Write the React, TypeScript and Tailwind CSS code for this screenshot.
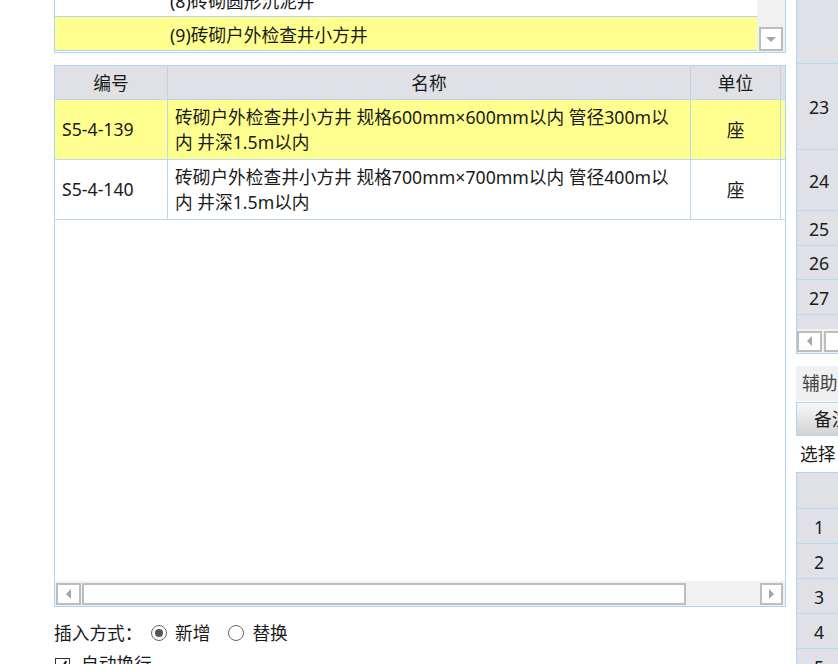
import React from "react";

// 定额查询面板：清单条目 + 定额子目表 + 右侧行号栏

type Quota = {
  code: string;
  name: string[];
  unit: string;
  active?: boolean;
};

const quotas: Quota[] = [
  {
    code: "S5-4-139",
    name: ["砖砌户外检查井小方井 规格600mm×600mm以内 管径300m以", "内 井深1.5m以内"],
    unit: "座",
    active: true,
  },
  {
    code: "S5-4-140",
    name: ["砖砌户外检查井小方井 规格700mm×700mm以内 管径400m以", "内 井深1.5m以内"],
    unit: "座",
  },
];

function Arrow({ dir }: { dir: "down" | "left" | "right" }) {
  const pts =
    dir === "down" ? "0,0 10,0 5,5" : dir === "left" ? "5,0 5,10 0,5" : "0,0 0,10 5,5";
  const w = dir === "down" ? 10 : 5;
  const h = dir === "down" ? 5 : 10;
  return (
    <svg width={w} height={h} viewBox={`0 0 ${w} ${h}`}>
      <polygon points={pts} fill="#a6a6a6" />
    </svg>
  );
}

function ScrollButton({ dir, className }: { dir: "down" | "left" | "right"; className: string }) {
  return (
    <div className={`shrink-0 flex items-center justify-center bg-white border-2 border-[#bdbdbd] ${className}`}>
      <Arrow dir={dir} />
    </div>
  );
}

function TopList() {
  return (
    <div className="h-[53px] shrink-0 flex border-x border-b border-[#aad6f4]">
      <div className="flex-1 flex flex-col">
        <div className="h-[17px] shrink-0 overflow-hidden border-b border-[#aad6f4]">
          <div className="h-[34px] -mt-[17px] flex items-center pl-[115px] pt-[2px]">(8)砖砌圆形沉泥井</div>
        </div>
        <div className="h-[34px] shrink-0 bg-[#ffff8f] flex items-center pl-[115px] pt-[3px] border-b border-[#aad6f4]">
          (9)砖砌户外检查井小方井
        </div>
      </div>
      <div className="w-[28px] bg-[#f1f1f1] flex flex-col justify-end items-center pb-[1px]">
        <ScrollButton dir="down" className="w-[24px] h-[24px]" />
      </div>
    </div>
  );
}

function QuotaTable() {
  return (
    <div className="mt-[12px] h-[542px] shrink-0 flex flex-col border border-[#aad6f4]">
      <div className="h-[34px] flex bg-[#dfe1e6] border-b border-[#b9d9f0] shrink-0 pt-[1px]">
        <div className="w-[113px] border-r border-[#c5d3e0] flex items-center justify-center">编号</div>
        <div className="w-[523px] border-r border-[#c5d3e0] flex items-center justify-center">名称</div>
        <div className="w-[90px] border-r border-[#c5d3e0] flex items-center justify-center">单位</div>
        <div className="flex-1" />
      </div>
      {quotas.map((q) => (
        <div
          key={q.code}
          className={`h-[60px] flex border-b border-[#b9d9f0] shrink-0 ${q.active ? "bg-[#ffff8f]" : "bg-white"}`}
        >
          <div className="w-[113px] border-r border-[#b9d9f0] flex items-center pl-[7px]">{q.code}</div>
          <div className="w-[523px] border-r border-[#b9d9f0] flex flex-col justify-center pl-[7px] leading-[25px] whitespace-nowrap">
            {q.name.map((line) => (
              <span key={line}>{line}</span>
            ))}
          </div>
          <div className="w-[90px] border-r border-[#b9d9f0] flex items-center justify-center pt-[2px]">
            {q.unit}
          </div>
          <div className="flex-1" />
        </div>
      ))}
      <div className="flex-1" />
      <div className="h-[25px] shrink-0 bg-[#f1f1f1] flex items-center pl-[1px] pr-[2px]">
        <ScrollButton dir="left" className="w-[25px] h-[22px]" />
        <div className="ml-[1px] w-[604px] h-[22px] shrink-0 bg-white border-2 border-[#bdbdbd]" />
        <div className="flex-1" />
        <ScrollButton dir="right" className="w-[23px] h-[22px]" />
      </div>
    </div>
  );
}

function InsertOptions() {
  return (
    <div className="flex flex-col shrink-0">
      <div className="mt-[14px] h-[24px] shrink-0 flex items-center">
        <span className="w-[97px]">插入方式：</span>
        <span className="w-[16px] h-[16px] rounded-full border border-[#666] flex items-center justify-center">
          <span className="w-[8px] h-[8px] rounded-full bg-[#555]" />
        </span>
        <span className="ml-[8px]">新增</span>
        <span className="ml-[18px] w-[16px] h-[16px] rounded-full border border-[#666]" />
        <span className="ml-[8px]">替换</span>
      </div>
      <div className="mt-[7px] h-[24px] shrink-0 flex items-center">
        <span className="ml-[1px] mt-[3px] w-[15px] h-[15px] border border-[#333] bg-white flex items-center justify-center">
          <svg width="11" height="11" viewBox="0 0 11 11">
            <path d="M2 5.8 L4.3 8.8 L9.3 1.2" fill="none" stroke="#111" strokeWidth="2" />
          </svg>
        </span>
        <span className="ml-[11px]">自动换行</span>
      </div>
    </div>
  );
}

function RowHead({ n, h, last }: { n?: string; h: string; last?: boolean }) {
  return (
    <div
      className={`${h} shrink-0 w-[44px] bg-[#dfe1e6] flex items-center justify-center pt-[2px] ${last ? "" : "border-b border-[#b9d9f0]"}`}
    >
      {n}
    </div>
  );
}

function RightPanel() {
  return (
    <div className="w-[42px] shrink-0 overflow-hidden flex flex-col">
      <div className="w-[60px] h-[354px] shrink-0 flex flex-col border-l border-b border-[#aad6f4] bg-[#dfe1e6]">
        <RowHead h="h-[64px]" />
        <RowHead n="23" h="h-[86px]" />
        <RowHead n="24" h="h-[61px]" />
        <RowHead n="25" h="h-[35px]" />
        <RowHead n="26" h="h-[34px]" />
        <RowHead n="27" h="h-[35px]" />
        <div className="h-[14px] overflow-hidden shrink-0 w-[44px]">
          <div className="h-[34px] flex items-center justify-center pt-[20px]">28</div>
        </div>
        <div className="h-[24px] shrink-0 bg-[#f1f1f1] flex items-center">
          <ScrollButton dir="left" className="w-[25px] h-[21px]" />
          <div className="ml-[2px] w-[40px] h-[21px] shrink-0 bg-white border-2 border-[#bdbdbd]" />
        </div>
      </div>
      <div className="mt-[12px] h-[35px] w-[60px] shrink-0 bg-[#f0f0f0] flex items-center pl-[6px] text-[#444]">
        辅助
      </div>
      <div className="w-[60px] h-[34px] mt-[1px] shrink-0 border-l border-t border-b border-[#aad6f4] bg-linear-to-b from-[#f8f8f8] to-[#d3d3d3] flex items-center pl-[17px]">
        备注
      </div>
      <div className="h-[36px] w-[60px] shrink-0 flex items-center pl-[4px]">选择</div>
      <div className="w-[60px] shrink-0 flex flex-col border-l border-t border-[#aad6f4]">
        <RowHead h="h-[36px]" />
        <RowHead n="1" h="h-[35px]" />
        <RowHead n="2" h="h-[35px]" />
        <RowHead n="3" h="h-[35px]" />
        <RowHead n="4" h="h-[35px]" />
        <RowHead n="5" h="h-[35px]" />
      </div>
    </div>
  );
}

export default function App() {
  return (
    <div className="w-[838px] h-[664px] overflow-hidden bg-white flex text-[17.7px] text-[#1a1a1a] font-['Noto_Sans','Noto_Sans_CJK_SC',sans-serif]">
      <div className="w-[796px] shrink-0 pl-[54px] pr-[10px] flex flex-col">
        <TopList />
        <QuotaTable />
        <InsertOptions />
      </div>
      <RightPanel />
    </div>
  );
}
